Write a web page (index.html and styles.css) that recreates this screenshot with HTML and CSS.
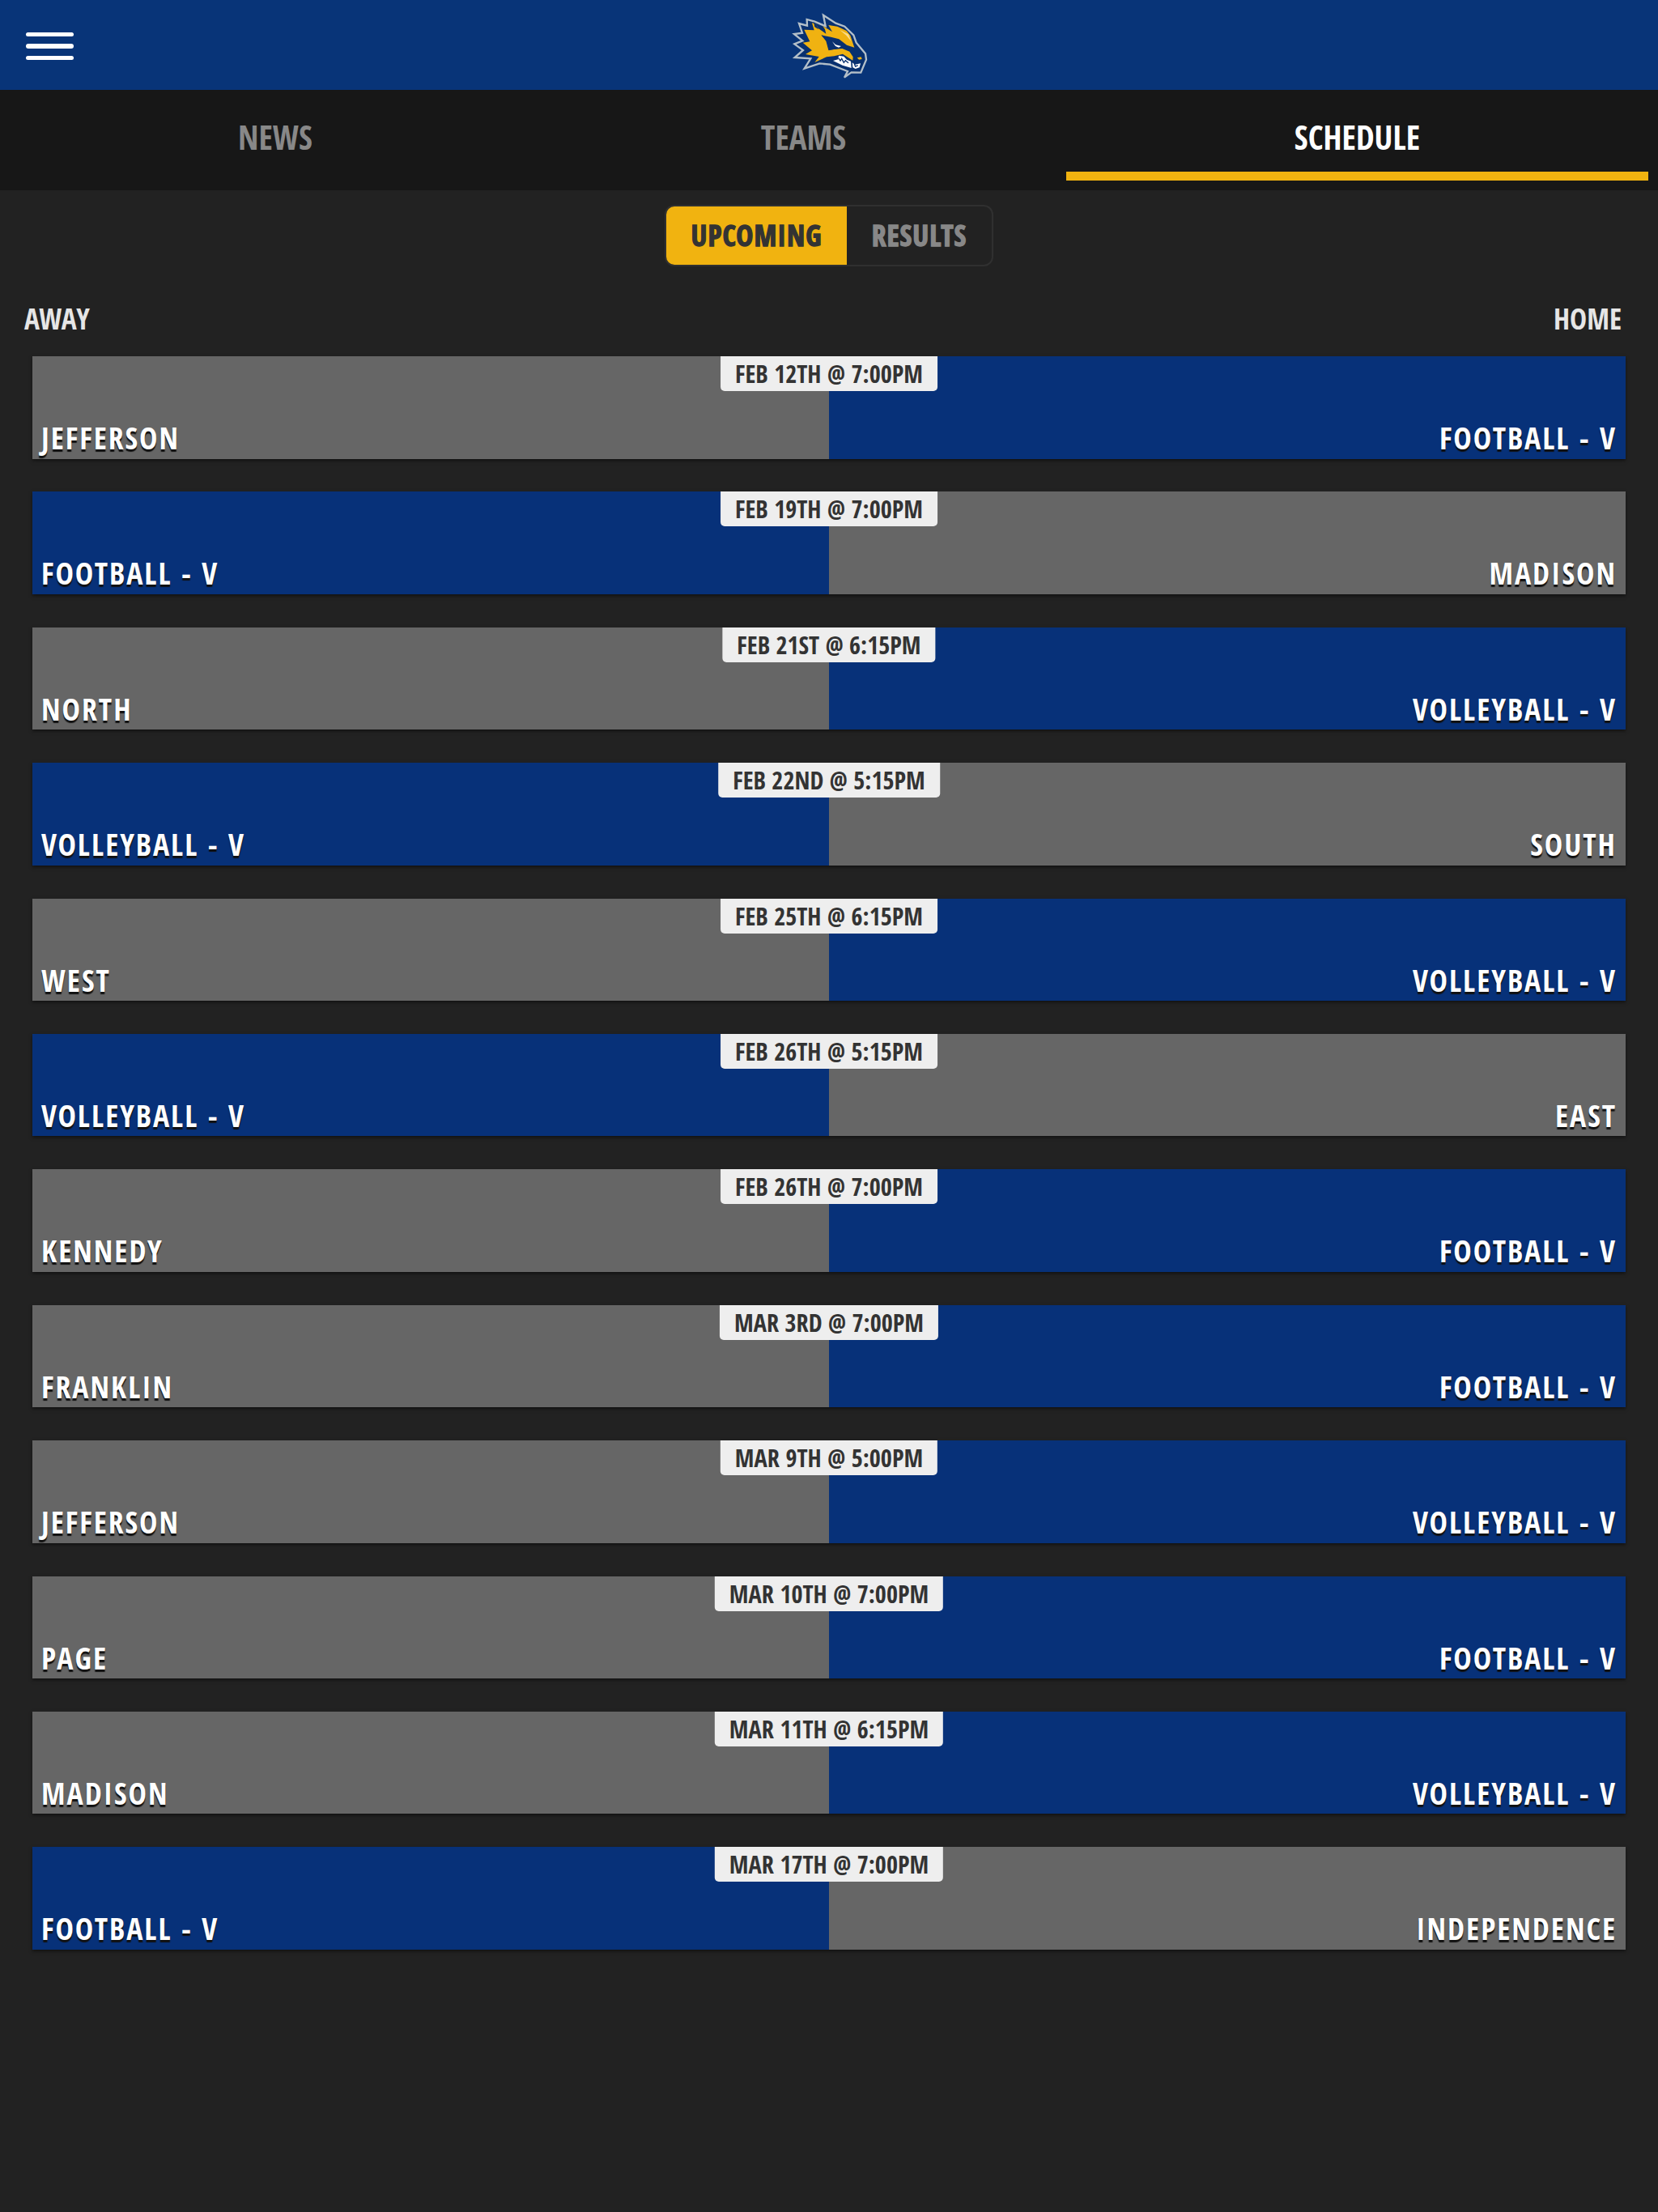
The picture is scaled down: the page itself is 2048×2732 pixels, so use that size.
FILE: index.html
```html
<!DOCTYPE html>
<html lang="en">
<head>
    <meta charset="UTF-8">
    <meta name="viewport" content="width=device-width, initial-scale=1.0">
    <title>Schedule</title>
    <link rel="stylesheet" href="styles.css">
</head>
<body>

    <header class="top-bar">
        <button class="menu-btn" aria-label="Menu">
            <span></span>
            <span></span>
            <span></span>
        </button>
        <svg class="logo" viewBox="0 0 390 330" aria-label="Team logo">
            <!-- outline -->
            <path fill="#08306f" stroke="#b3bfc9" stroke-width="7" stroke-linejoin="miter" stroke-miterlimit="3" d="M168 53 L214 83 L247 95 L280 127 L290 155 L324 196 L327 218 L307 266 L272 265 L246 284 L258 261 L193 236 L154 232 L98 251 L121 214 L62 210 L93 183 L61 160 L91 148 L60 123 L90 119 L78 84 L108 92 L107 69 L136 77 L176 94 Z"/>
            <!-- mane and face -->
            <path fill="#f0b211" d="M126 82 L141 86 L149 102 L178 122 L174 106 L166 93 L201 115 L187 90 L220 95 L254 111 L268 128 L283 173 L255 164 L226 142 L196 134 L160 127 L178 149 L187 182 L238 177 L265 188 L278 208 L277 221 L240 197 L208 205 L180 208 L136 228 L152 207 L102 198 L126 184 L92 155 L118 151 L97 107 L134 109 Z"/>
            <path fill="#f8dc8c" d="M229 108 L261 124 L271 150 L253 128 Z"/>
            <path fill="#08306f" d="M132 79 L142 87 L150 106 L136 97 Z M162 128 L190 138 L228 153 L255 174 L225 176 L188 184 L182 151 Z"/>
            <!-- eye -->
            <path fill="#fff" d="M201 151 L214 163 L234 168 L225 173 L213 168 Z"/>
            <!-- teeth -->
            <path fill="#fff" d="M225 203 L244 206 L255 218 L270 224 L272 249 L239 239 L204 222 L223 217 Z M275 229 L285 236 L306 232 L302 247 L287 252 L277 247 Z"/>
            <path fill="none" stroke="#08306f" stroke-width="4" d="M224 212 L231 222 L236 214 L244 229 L250 221 L261 230 M283 234 L287 243 L296 239"/>
            <path fill="#f0b211" d="M293 211 L308 208 L311 216 L300 218 Z"/>
        </svg>
    </header>

    <nav class="tabs">
        <a class="tab">News</a>
        <a class="tab">Teams</a>
        <a class="tab active">Schedule</a>
    </nav>

    <main>
        <div class="toggle">
            <button class="toggle-btn selected">Upcoming</button>
            <button class="toggle-btn">Results</button>
        </div>

        <div class="labels">
            <span>Away</span>
            <span>Home</span>
        </div>

        <div class="games">
            <div class="game">
                <div class="team">Jefferson</div>
                <div class="team home ours">Football - V</div>
                <div class="date">Feb 12th @ 7:00pm</div>
            </div>
            <div class="game">
                <div class="team ours">Football - V</div>
                <div class="team home">Madison</div>
                <div class="date">Feb 19th @ 7:00pm</div>
            </div>
            <div class="game">
                <div class="team">North</div>
                <div class="team home ours">Volleyball - V</div>
                <div class="date">Feb 21st @ 6:15pm</div>
            </div>
            <div class="game">
                <div class="team ours">Volleyball - V</div>
                <div class="team home">South</div>
                <div class="date">Feb 22nd @ 5:15pm</div>
            </div>
            <div class="game">
                <div class="team">West</div>
                <div class="team home ours">Volleyball - V</div>
                <div class="date">Feb 25th @ 6:15pm</div>
            </div>
            <div class="game">
                <div class="team ours">Volleyball - V</div>
                <div class="team home">East</div>
                <div class="date">Feb 26th @ 5:15pm</div>
            </div>
            <div class="game">
                <div class="team">Kennedy</div>
                <div class="team home ours">Football - V</div>
                <div class="date">Feb 26th @ 7:00pm</div>
            </div>
            <div class="game">
                <div class="team">Franklin</div>
                <div class="team home ours">Football - V</div>
                <div class="date">Mar 3rd @ 7:00pm</div>
            </div>
            <div class="game">
                <div class="team">Jefferson</div>
                <div class="team home ours">Volleyball - V</div>
                <div class="date">Mar 9th @ 5:00pm</div>
            </div>
            <div class="game">
                <div class="team">Page</div>
                <div class="team home ours">Football - V</div>
                <div class="date">Mar 10th @ 7:00pm</div>
            </div>
            <div class="game">
                <div class="team">Madison</div>
                <div class="team home ours">Volleyball - V</div>
                <div class="date">Mar 11th @ 6:15pm</div>
            </div>
            <div class="game">
                <div class="team ours">Football - V</div>
                <div class="team home">Independence</div>
                <div class="date">Mar 17th @ 7:00pm</div>
            </div>
        </div>
    </main>

</body>
</html>
```
FILE: styles.css
```css
* {
    box-sizing: border-box;
}

body {
    margin: 0;
    min-height: 100vh;
    background: #222;
    color: #fff;
    font-family: "Open Sans Condensed", "Open Sans", sans-serif;
    font-stretch: 75%;
    font-weight: 700;
    text-transform: uppercase;
}

button {
    margin: 0;
    padding: 0;
    border: 0;
    background: none;
    color: inherit;
    font: inherit;
    text-transform: inherit;
    letter-spacing: inherit;
}

/* Header */
.top-bar {
    display: grid;
    grid-template-columns: 1fr auto 1fr;
    align-items: center;
    height: 111px;
    background: #083478;
}

.menu-btn {
    display: flex;
    flex-direction: column;
    gap: 9px;
    width: 59px;
    margin: 3px 0 0 32px;
}

.menu-btn span {
    height: 5.6px;
    border-radius: 3px;
    background: #fff;
}

.logo {
    width: 130px;
    height: 110px;
    margin-left: 3px;
}

/* Tabs */
.tabs {
    display: grid;
    grid-template-columns: 680px 623px 745px;
    height: 124px;
    background: #171717;
    color: #888;
    font-size: 40.7px;
    line-height: 60px;
    text-align: center;
}

.tab {
    height: 112px;
    margin: 0 12px 0 14px;
    padding-top: 28px;
}

.tab:first-child {
    margin-left: 12px;
}

.tab.active {
    border-bottom: 11px solid #f1b310;
    color: #fff;
}

/* Upcoming / results switch */
.toggle {
    display: flex;
    width: 406px;
    height: 76px;
    margin: 18px auto 0;
    border: 2px solid #303030;
    border-radius: 12px;
    overflow: hidden;
    color: #888;
    font-size: 35.5px;
    font-weight: 800;
    letter-spacing: 1px;
    -webkit-text-stroke: 1.3px;
}

.toggle-btn {
    flex: 1;
    padding-bottom: 2px;
}

.toggle-btn.selected {
    flex: 0 0 223px;
    background: #f1b310;
    color: #333;
}

.labels {
    display: flex;
    justify-content: space-between;
    padding: 39px 45px 0 30px;
    color: #e6e6e6;
    font-size: 35.4px;
    line-height: 50px;
}

/* Games */
.games {
    display: flex;
    flex-direction: column;
    gap: 40.9px;
    padding: 22px 40px 0;
}

.game {
    position: relative;
    display: flex;
    height: 126.5px;
    box-shadow: 0 2px 4px rgba(0, 0, 0, 0.5);
}

.team {
    flex: 1;
    display: flex;
    align-items: flex-end;
    padding: 0 11px 0.5px;
    background: #666;
    font-size: 37.7px;
    line-height: 50px;
    letter-spacing: 2px;
    text-shadow: 0 3px 1px #111;
}

.team.home {
    justify-content: flex-end;
}

.team.ours {
    background: #073179;
}

.date {
    position: absolute;
    top: 0;
    left: 50%;
    transform: translateX(-50%);
    height: 43px;
    padding: 0 18px;
    border-radius: 0 0 5px 5px;
    background: #eee;
    color: #333;
    font-size: 30.3px;
    line-height: 43px;
    white-space: nowrap;
}
```
